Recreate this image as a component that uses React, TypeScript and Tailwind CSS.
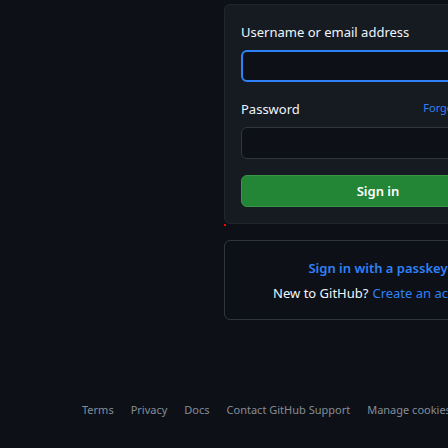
const field =
  "block h-8 w-full rounded-md bg-[#0d1117] px-3 text-[13px] text-[#f0f6fc] outline-none";

const footerLinks = [
  "Terms",
  "Privacy",
  "Docs",
  "Contact GitHub Support",
  "Manage cookies",
  "Do not share my personal information",
];

function SignInForm() {
  return (
    <form
      className="rounded-md border border-[#21262d] bg-[#161b22] p-4"
      onSubmit={(e) => e.preventDefault()}
    >
      <label htmlFor="login" className="mb-1.5 block leading-[23px]">
        Username or email address
      </label>
      <input
        id="login"
        type="text"
        autoComplete="username"
        className={`${field} border-2 border-[#2f81f7]`}
      />
      <div className="mt-4 mb-1.5 flex items-start justify-between">
        <label htmlFor="password" className="leading-[23px]">
          Password
        </label>
        <a href="#forgot" className="text-[11px] leading-5 text-[#2f81f7]">
          Forgot password?
        </a>
      </div>
      <input
        id="password"
        type="password"
        autoComplete="current-password"
        className={`${field} border border-[#30363d]`}
      />
      <button
        type="submit"
        className="mt-4 block h-8 w-full rounded-md border border-[#399649] bg-[#238636] pt-0.5 text-[13px] font-semibold text-white"
      >
        Sign in
      </button>
    </form>
  );
}

function AlternativeSignIn() {
  return (
    <section className="mt-3.5 flex flex-col items-center gap-0.5 rounded-md border border-[#30363d] px-4 pt-4 pb-3.5 leading-[23px]">
      <button type="button" className="font-semibold text-[#2f81f7]">
        Sign in with a passkey
      </button>
      <p className="flex gap-1">
        New to GitHub?
        <a href="#join" className="text-[#2f81f7]">
          Create an account
        </a>
      </p>
    </section>
  );
}

export default function App() {
  return (
    <div className="min-h-screen overflow-hidden bg-[#0d1117] pt-1 font-['Noto_Sans','Open_Sans',sans-serif] text-[13px] text-[#f0f6fc]">
      <main className="flex pl-56">
        <div className="w-[308px] shrink-0">
          <SignInForm />
          <div className="size-0.5 bg-[#ff0000]" />
          <AlternativeSignIn />
        </div>
      </main>
      <footer className="mt-20 pl-[82px]">
        <ul className="flex gap-[17px] text-[11px] leading-5 whitespace-nowrap text-[#848d97]">
          {footerLinks.map((label) => (
            <li key={label}>
              <a href="#footer">{label}</a>
            </li>
          ))}
        </ul>
      </footer>
    </div>
  );
}
